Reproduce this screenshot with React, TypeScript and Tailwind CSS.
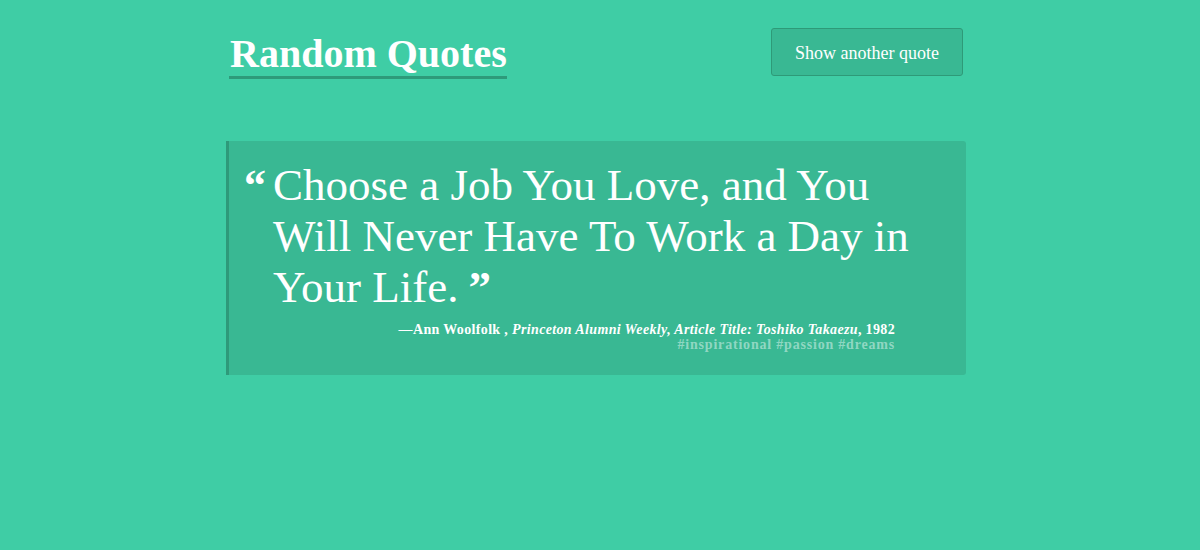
import React from 'react';

const quote = {
  text: 'Choose a Job You Love, and You Will Never Have To Work a Day in Your Life.',
  author: 'Ann Woolfolk',
  source: 'Princeton Alumni Weekly, Article Title: Toshiko Takaezu',
  year: '1982',
  tags: ['inspirational', 'passion', 'dreams'],
};

export default function App() {
  return (
    <div className="min-h-screen h-[550px] bg-[#3fcda5] text-white font-['Liberation_Serif',serif]">
      <div className="mx-auto w-[748px]">
        <header className="flex items-start justify-between pt-[28px] pl-[3px] pr-[11px]">
          <h1 className="mt-[3px] inline-block border-b-[3px] border-[#2e9a7a] text-[40px] font-bold leading-[45px] pl-px">
            Random Quotes
          </h1>
          <button className="h-[48px] w-[192px] rounded-[3px] border border-[#2e9a78] bg-[#39b893] pt-[3px] text-[18px] text-white">
            Show another quote
          </button>
        </header>

        <blockquote className="mt-[62px] w-[740px] rounded-r-[3px] border-l-[3px] border-[#2e9a7a] bg-[#39b893] pt-[19px] pb-[23px] pl-[15px]">
          <div className="flex items-baseline">
            <span className="w-[29px] shrink-0 text-[44px] font-bold leading-[51px]">“</span>
            <p className="w-[650px] text-[45px] leading-[51px]">
              {quote.text}
              <span className="ml-[10px] inline-block font-bold">”</span>
            </p>
          </div>
          <div className="mt-[10px] pr-[71px] text-right text-[14px] font-bold leading-[14px]">
            <div className="tracking-[0.35px]">
              —{quote.author} , <cite className="italic">{quote.source}</cite>, {quote.year}
            </div>
            <div className="mt-px tracking-[0.8px] text-white/45">
              {quote.tags.map((t) => `#${t}`).join(' ')}
            </div>
          </div>
        </blockquote>
      </div>
    </div>
  );
}
